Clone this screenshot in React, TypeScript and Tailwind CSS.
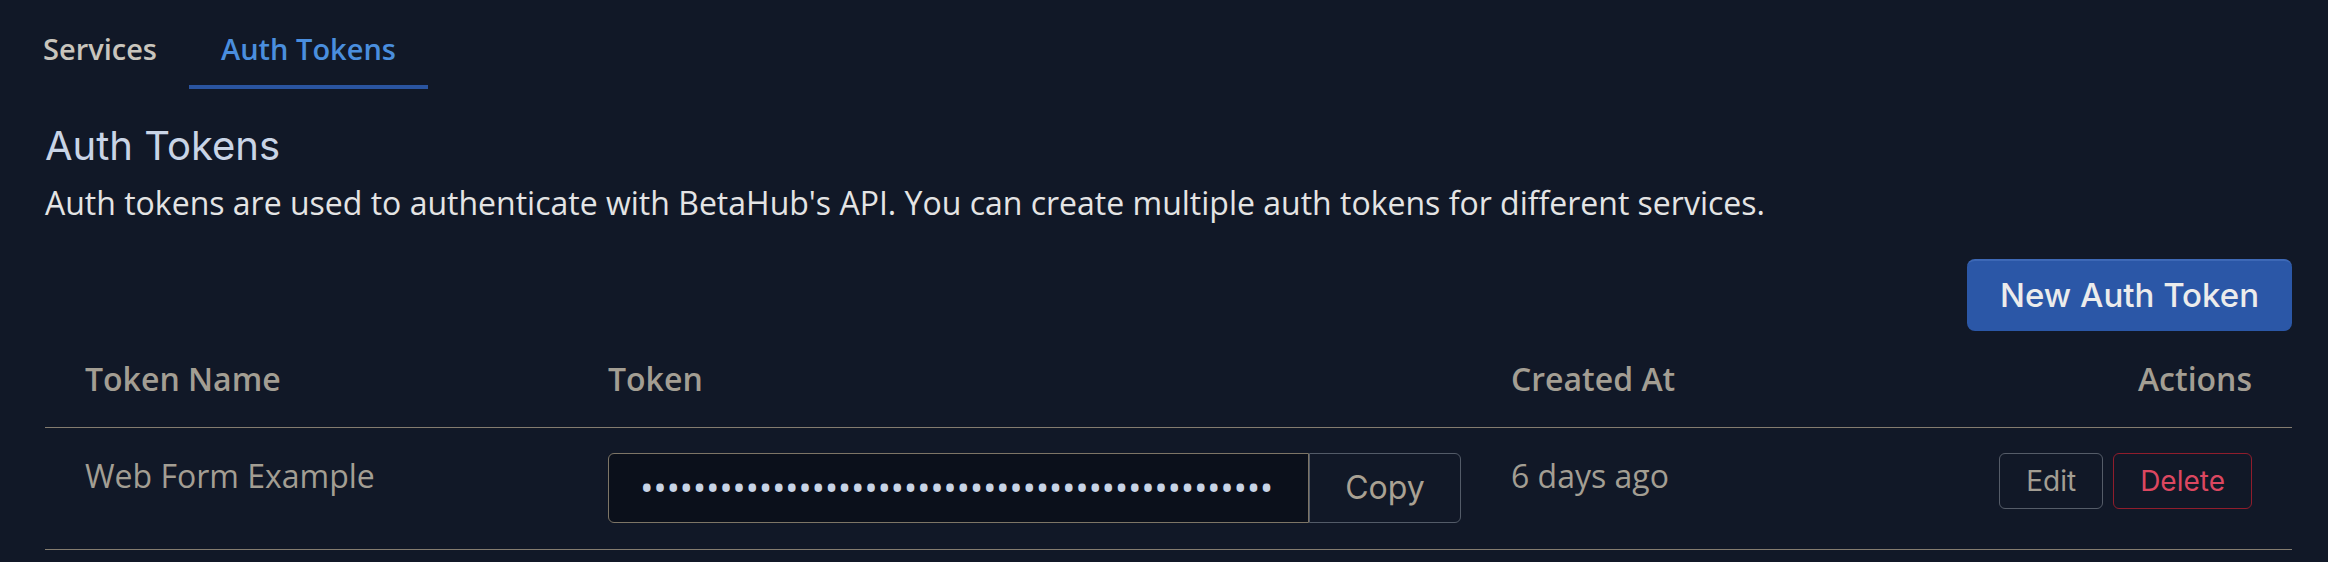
const TOKENS = [
  { name: "Web Form Example", created: "6 days ago", length: 48 },
];

const display = { fontFamily: "Inter, 'Noto Sans', sans-serif" };
const body = { fontFamily: "'Open Sans', 'Noto Sans', sans-serif" };

function Tabs() {
  return (
    <div className="-ml-[34px] flex">
      <button className="border-b-4 border-transparent px-8 py-4 text-[29px] leading-[40px] font-semibold text-[#c9c5bd]">
        Services
      </button>
      <button className="border-b-4 border-[#2a54a0] px-8 py-4 text-[29px] leading-[40px] font-semibold text-[#4a8ede]">
        Auth Tokens
      </button>
    </div>
  );
}

export default function App() {
  return (
    <div className="min-h-screen bg-[#111827] pt-[13px] pr-[36px] pl-[45px]" style={body}>
      <Tabs />

      <h2 className="mt-[33px] text-[40px] leading-[47px] font-normal text-[#c9d4e6]" style={display}>
        Auth Tokens
      </h2>
      <p className="mt-[10px] text-[32px] leading-[48px] text-[#e4e4e4]">
        Auth tokens are used to authenticate with BetaHub's API. You can create multiple auth tokens for different services.
      </p>

      <div className="mt-[32px] flex justify-end">
        <button
          className="h-[72px] rounded-[8px] border-t-2 border-[#3d68b6] bg-[#2b57a7] px-[33px] text-[33px] font-medium text-[#ececec]"
          style={display}
        >
          New Auth Token
        </button>
      </div>

      <table className="w-full table-fixed">
        <thead>
          <tr className="border-b-[1.5px] border-[#847c6f] text-left text-[32px] leading-[48px] font-semibold text-[#a39e93]">
            <th className="w-[523px] px-10 py-6 font-semibold">Token Name</th>
            <th className="w-[903px] px-10 py-6 font-semibold">Token</th>
            <th className="w-[490px] px-10 py-6 font-semibold">Created At</th>
            <th className="px-10 py-6 text-right font-semibold">Actions</th>
          </tr>
        </thead>
        <tbody>
          {TOKENS.map((t) => (
            <tr key={t.name} className="border-b-[1.5px] border-[#847c6f] align-top text-[32px] leading-[48px] text-[#a39e93]">
              <td className="px-10 pt-[24px] pb-[26px]">{t.name}</td>
              <td className="pt-[25px] pr-[10px] pb-[26px] pl-10">
                <div className="flex">
                  <div className="flex h-[70px] w-[701px] items-center rounded-l-[6px] border border-[#7d7566] bg-[#0b101b] pl-[31px] text-[36px] text-[#c8d4e6]">
                    {Array.from({ length: t.length }).map((_, i) => (
                      <span key={i} className="inline-block w-[13.2px] text-center leading-none">•</span>
                    ))}
                  </div>
                  <button
                    className="h-[70px] w-[152px] rounded-r-[6px] border border-[#535b68] text-[32px] text-[#a9a193]"
                    style={display}
                  >
                    Copy
                  </button>
                </div>
              </td>
              <td className="px-10 pt-[24px] pb-[26px]">{t.created}</td>
              <td className="px-10 pt-[25px] pb-[26px]">
                <div className="flex justify-end gap-[10px]" style={display}>
                  <button className="h-[56px] rounded-[6px] border border-[#555c68] px-[26px] text-[28px] text-[#a39e93]">
                    Edit
                  </button>
                  <button className="h-[56px] rounded-[6px] border border-[#8f1d2c] px-[26px] text-[28px] text-[#dc4760]">
                    Delete
                  </button>
                </div>
              </td>
            </tr>
          ))}
        </tbody>
      </table>
    </div>
  );
}
